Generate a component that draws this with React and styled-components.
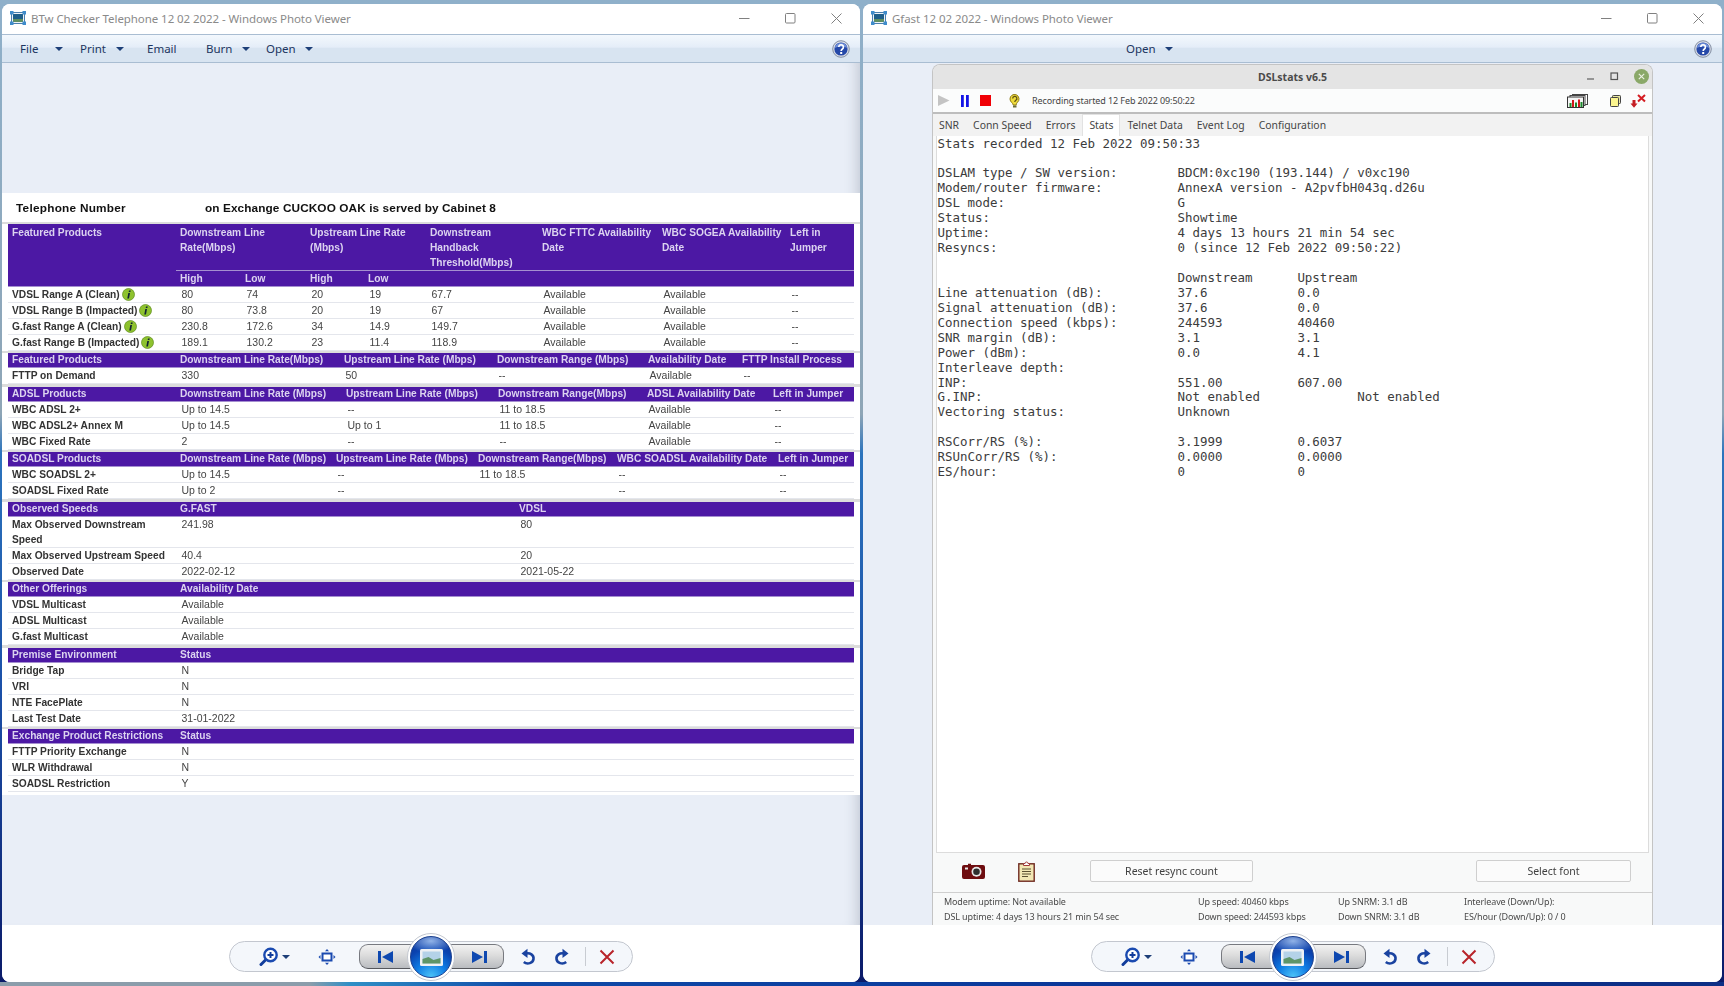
import React from "react";
import styled, { createGlobalStyle } from "styled-components";

const Global = createGlobalStyle`
  html, body { margin: 0; padding: 0; height: 986px; overflow: hidden; }
  #root { height: 986px; }
  * { box-sizing: border-box; }
`;

const Desktop = styled.div`
  height: 986px;
  width: 1724px;
  display: flex;
  gap: 3px;
  padding: 4px 2px;
  background:
    linear-gradient(to right, #8b9dab 0, #8b9dab 310px, #2f8fc6 350px, #0f4aa8 520px, #0b3a9c 1000px, #0a2f8c 1300px, #0d2f86 1724px) bottom / 100% 4px no-repeat,
    linear-gradient(to bottom, #8fb0ca 0, #8ea5b6 42%, #2c74bd 46%, #1b50a8 70%, #0b1a68 100%);
`;

const Window = styled.section`
  flex: 0 0 ${(p) => p.$w}px;
  display: flex;
  flex-direction: column;
  background: #fff;
  border-radius: 8px;
  overflow: hidden;
  font-family: "Noto Sans", "Open Sans", sans-serif;
`;

const TitleBar = styled.header`
  flex: 0 0 30px;
  display: flex;
  align-items: center;
  padding: 0 8px 2px;
  gap: 5px;
  background: #fff;
`;

const TitleText = styled.div`
  flex: 1;
  font-size: 11.5px;
  color: #8a8a8a;
  letter-spacing: -0.07px;
`;

const WinControls = styled.div`
  display: flex;
  align-items: center;
  gap: 35px;
  padding-right: 10px;
  svg { display: block; }
`;

const MenuBar = styled.nav`
  flex: 0 0 29px;
  display: flex;
  align-items: center;
  padding: 0 10px 0 ${(p) => p.$pad}px;
  background: linear-gradient(to bottom, #f3f8fd 0, #e4edf8 46%, #d8e4f1 47%, #d8e4f1 100%);
  border-top: 1px solid #a9bdd2;
  border-bottom: 1px solid #a9bdd2;
`;

const MenuItem = styled.div`
  flex: 0 0 ${(p) => p.$w}px;
  display: flex;
  align-items: center;
  font-size: 11.5px;
  color: #1c3560;
`;

const MenuLabel = styled.span`
  flex: 0 0 ${(p) => p.$w}px;
`;

const Caret = styled.span`
  width: 0;
  height: 0;
  border-left: 4px solid transparent;
  border-right: 4px solid transparent;
  border-top: 4px solid #1d3f78;
`;

const HelpWrap = styled.div`
  margin-left: auto;
  display: flex;
`;

const Viewer = styled.main`
  flex: 1;
  min-height: 0;
  background: #e9eef7;
  box-shadow: inset ${(p) => (p.$shade ? "-14px 0 14px -12px rgba(60,70,90,.25)" : "none")};
  display: flex;
  flex-direction: column;
  align-items: center;
  padding-top: ${(p) => p.$top}px;
`;

const Footer = styled.footer`
  flex: 0 0 57px;
  background: #fff;
  display: flex;
  justify-content: center;
  padding-top: 16px;
`;

const NavPill = styled.div`
  position: relative;
  width: 404px;
  height: 31px;
  border: 1px solid #c3c7cf;
  border-radius: 16px;
  background: #f4f7fb;
  display: flex;
  align-items: center;
`;

const NavIcon = styled.span`
  flex: 0 0 ${(p) => p.$w}px;
  margin-left: ${(p) => p.$ml}px;
  display: flex;
  justify-content: center;
  align-items: center;
  svg { display: block; }
`;

const NavCapsule = styled.div`
  flex: 0 0 145px;
  margin-left: 22px;
  height: 25px;
  border: 1px solid #77797f;
  border-bottom: 1.5px solid #55575c;
  border-radius: 9px;
  background: linear-gradient(to bottom, #f2f2f2 0, #dcdcdc 45%, #b9bcc0 100%);
  display: flex;
  justify-content: space-between;
  align-items: center;
  padding: 0 16px 0 18px;
`;

const NavSep = styled.span`
  flex: 0 0 1px;
  height: 19px;
  margin-left: 14px;
  background: #c8ccd2;
`;

const OrbRing = styled.div`
  position: absolute;
  left: 177px;
  top: -9px;
  width: 48px;
  height: 48px;
  border-radius: 50%;
  background: #fff;
  border: 1px solid #c4c8d0;
  display: flex;
  align-items: center;
  justify-content: center;
`;

const Orb = styled.div`
  width: 42px;
  height: 42px;
  border-radius: 50%;
  border: 1px solid #1a3f8e;
  background:
    radial-gradient(ellipse 60% 30% at 50% 10%, rgba(190, 220, 255, 0.75) 0, rgba(190, 220, 255, 0) 100%),
    radial-gradient(circle at 50% 100%, #4cc4f8 0, #0f7ce4 35%, #0a43b0 65%, #0a2f94 100%);
  display: flex;
  align-items: center;
  justify-content: center;
`;

/* ------- scanned document ------- */
const Doc = styled.article`
  width: 100%;
  background: #dcdcdc;
  font-family: "Liberation Sans", Arial, sans-serif;
  font-size: 10.5px;
  filter: blur(0.3px);
`;

const DocTitle = styled.h1`
  margin: 0;
  height: 29px;
  display: flex;
  align-items: center;
  padding-left: 14px;
  background: #fff;
  font-size: 11.8px;
  font-weight: 700;
  color: #111;
  letter-spacing: 0.1px;
`;

const DocTitleLabel = styled.span`
  flex: 0 0 189px;
  letter-spacing: 0.25px;
`;

const Section = styled.div`
  background: #fff;
  padding: 0 6px;
  margin-top: ${(p) => (p.$first ? 2 : 2.57)}px;
`;

const Grid = styled.div`
  display: grid;
  grid-template-columns: ${(p) => p.$cols};
`;

const HeadGrid = styled(Grid)`
  background: #4c18a4;
  color: #dcd3f0;
  font-weight: 700;
  font-size: 10.2px;
  border-bottom: 1px solid #a58fd0;
`;

const HeadCell = styled.div`
  grid-column: span ${(p) => p.$span || 1};
  grid-row: span ${(p) => p.$rows || 1};
  padding-left: 4px;
  padding-right: 2px;
  line-height: ${(p) => p.$lh || 14}px;
  ${(p) => p.$top && "padding-top: 0.5px;"}
  white-space: ${(p) => (p.$wrap ? "normal" : "nowrap")};
`;

const SubCell = styled.div`
  height: 16px;
  line-height: 15px;
  padding-left: 4px;
  border-top: 1px solid #a58fd0;
`;

const BodyGrid = styled(Grid)`
  border-bottom: 1px solid #e4e6ec;
  min-height: 16px;
`;

const NameCell = styled.div`
  padding-left: 4px;
  padding-right: 6px;
  line-height: 15px;
  font-size: 10.2px;
  font-weight: 700;
  color: #333;
  display: block;
  white-space: ${(p) => (p.$wrap ? "normal" : "nowrap")};
  svg { vertical-align: -3px; margin-left: 2px; }
`;

const ValueCell = styled.div`
  padding-left: 5.5px;
  line-height: 15px;
  color: #444;
  white-space: nowrap;
`;

const DocEnd = styled.div`
  height: 3px;
  background: #fff;
`;

/* ------- DSLstats ------- */
const Dsl = styled.div`
  width: 721px;
  height: 861px;
  margin-top: 1px;
  display: flex;
  flex-direction: column;
  border: 1px solid #c4c4c4;
  border-bottom: 0;
  border-radius: 8px 8px 0 0;
  overflow: hidden;
  background: #f8f9f9;
  font-family: "Noto Sans", "Open Sans", sans-serif;
  color: #444;
  filter: blur(0.2px);
`;

const DslTitle = styled.div`
  position: relative;
  flex: 0 0 24px;
  background: #e4e4e4;
  display: flex;
  align-items: center;
  justify-content: center;
  font-size: 10.5px;
  font-weight: 700;
  color: #4a4a4a;
`;

const DslControls = styled.div`
  position: absolute;
  right: 3px;
  top: 4px;
  display: flex;
  align-items: center;
  gap: 12px;
  svg { display: block; }
`;

const DslTools = styled.div`
  flex: 0 0 25px;
  background: #fbfcfc;
  border-bottom: 2px solid #bdbdbd;
  display: flex;
  align-items: center;
  padding: 0 6px 0 5px;
  svg { display: block; }
`;

const DslToolIcon = styled.span`
  flex: 0 0 auto;
  margin-left: ${(p) => p.$ml || 0}px;
  display: flex;
`;

const DslStatus = styled.span`
  margin-left: 11px;
  font-size: 9px;
  letter-spacing: -0.1px;
  color: #444;
  flex: 1;
`;

const Tabs = styled.div`
  flex: 0 0 22px;
  background: #f2f2f2;
  display: flex;
  align-items: stretch;
  padding-left: 6px;
  gap: 14px;
  font-size: 10.4px;
`;

const Tab = styled.div`
  display: flex;
  align-items: center;
  color: #444;
  ${(p) =>
    p.$active &&
    `background:#fff; border:1px solid #e2e2e2; border-bottom:0; padding:0 6px 2px; margin:0 -7px 0 -7px;`}
`;

const StatsPane = styled.pre`
  flex: 1;
  min-height: 0;
  margin: 0 3px;
  padding: 0.5px 0 0 0.5px;
  background: #fff;
  border: 1px solid #dcdcdc;
  border-top: 0;
  font-family: "DejaVu Sans Mono", "Liberation Mono", monospace;
  font-size: 12.46px;
  line-height: 14.93px;
  color: #3c3c3c;
`;

const ActionRow = styled.div`
  flex: 0 0 39px;
  display: flex;
  align-items: center;
  padding-bottom: 3px;
  svg { display: block; }
`;

const ActionIcon = styled.span`
  flex: 0 0 ${(p) => p.$w}px;
  margin-left: ${(p) => p.$ml}px;
  display: flex;
  justify-content: center;
`;

const ActionButton = styled.div`
  flex: 0 0 ${(p) => p.$w}px;
  margin-left: ${(p) => p.$ml}px;
  height: 22px;
  border: 1px solid #cfcfcf;
  border-radius: 2px;
  background: #fbfbfb;
  display: flex;
  align-items: center;
  justify-content: center;
  font-size: 10.5px;
  color: #3f3f3f;
`;

const StatusPanel = styled.div`
  flex: 0 0 33px;
  border-top: 1px solid #cfcfcf;
  display: flex;
  padding: 1px 0 0 11px;
  font-size: 9px;
  letter-spacing: -0.12px;
  line-height: 15px;
  color: #4a4a4a;
`;

const StatusCol = styled.div`
  flex: 0 0 ${(p) => p.$w}px;
  white-space: nowrap;
`;

/* ------- icons ------- */
const PhotoIcon = () => (
  <svg width="16" height="16" viewBox="0 0 16 16">
    <rect x="1.5" y="2.5" width="13" height="11" fill="#eef3f8" stroke="#4a7fae" />
    <rect x="3" y="4" width="10" height="5" fill="#1f5f8a" />
    <rect x="3" y="9" width="10" height="3" fill="#5f8f62" />
    <g fill="#3f8ccb">
      <rect x="0" y="1" width="3.5" height="3.5" />
      <rect x="12.5" y="1" width="3.5" height="3.5" />
      <rect x="0" y="11.5" width="3.5" height="3.5" />
      <rect x="12.5" y="11.5" width="3.5" height="3.5" />
    </g>
  </svg>
);

const MinIcon = () => (
  <svg width="11" height="11" viewBox="0 0 11 11"><path d="M0 5.5H10.5" stroke="#808080" /></svg>
);
const MaxIcon = () => (
  <svg width="11" height="11" viewBox="0 0 11 11"><rect x=".5" y=".5" width="9.5" height="9.5" rx="1" fill="none" stroke="#808080" /></svg>
);
const CloseIcon = () => (
  <svg width="11" height="11" viewBox="0 0 11 11"><path d="M.5.5 10.5 10.5M10.5.5 .5 10.5" stroke="#808080" /></svg>
);

const HelpIcon = () => (
  <svg width="18" height="18" viewBox="0 0 18 18">
    <circle cx="9" cy="9" r="8.3" fill="#d8dce6" stroke="#6d7a90" strokeWidth=".8" />
    <circle cx="9" cy="9" r="6.6" fill="#2548a8" />
    <path d="M2.6 8a6.6 6.6 0 0 1 12.8 0c-3-1.6-9.8-1.6-12.8 0z" fill="#6f8ed8" />
    <path d="M6.8 7a2.3 2.3 0 1 1 3.6 2c-.9.6-1.2 1-1.2 2" fill="none" stroke="#fff" strokeWidth="1.7" />
    <rect x="8.2" y="12" width="2" height="2" fill="#fff" />
  </svg>
);

const ZoomIcon = () => (
  <svg width="20" height="20" viewBox="0 0 20 20">
    <path d="M7 12.5 2 17.5" stroke="#123d9c" strokeWidth="3" strokeLinecap="round" />
    <circle cx="11.5" cy="8" r="6.2" fill="#fff" stroke="#1a4ab0" strokeWidth="2.4" />
    <path d="M8.5 8h6M11.5 5v6" stroke="#123d9c" strokeWidth="2" />
  </svg>
);

const FitIcon = () => (
  <svg width="18" height="18" viewBox="0 0 18 18" fill="#1a4ab0">
    <rect x="4.5" y="5.5" width="9" height="7" fill="#fff" stroke="#1a4ab0" strokeWidth="2" />
    <path d="M9 1 11 3.300H7zM9 17 7 14.700H11zM.5 9 2.500 7V11zM17.500 9 15.500 11V7z" />
  </svg>
);

const PrevIcon = () => (
  <svg width="15" height="12" viewBox="0 0 15 12" fill="#0e48b0">
    <rect x="0" y="0" width="3" height="12" />
    <path d="M15 0V12L4 6z" />
  </svg>
);

const NextIcon = () => (
  <svg width="15" height="12" viewBox="0 0 15 12" fill="#0e48b0">
    <rect x="12" y="0" width="3" height="12" />
    <path d="M0 0V12L11 6z" />
  </svg>
);

const RotateIcon = ({ flip }) => (
  <svg width="18" height="18" viewBox="0 0 18 18" style={flip ? { transform: "scaleX(-1)" } : undefined}>
    <path d="M7 5.500C11 4.500 15 7 14.500 11 14 15 8.500 17 4.800 14" fill="none" stroke="#1a43a0" strokeWidth="2.6" />
    <path d="M2.500 5.500 8.500 .8V10z" fill="#1a43a0" />
  </svg>
);

const RedX = () => (
  <svg width="16" height="16" viewBox="0 0 16 16"><path d="M1.500 1.500 14.500 14.500M14.500 1.500 1.500 14.500" stroke="#b8242a" strokeWidth="2" /></svg>
);

const OrbPicture = () => (
  <svg width="23" height="17" viewBox="0 0 23 17">
    <rect width="23" height="17" rx="1.500" fill="#eef1f4" />
    <rect x="2.500" y="2.500" width="18" height="12" fill="#b4d2e8" />
    <path d="M2.500 14.500V10l6-2 5 3 7-2v5.500z" fill="#5e9568" />
  </svg>
);

const InfoBadge = () => (
  <svg width="13" height="13" viewBox="0 0 13 13">
    <circle cx="6.500" cy="6.500" r="6" fill="#8ec22e" stroke="#5d8a1c" strokeWidth=".7" />
    <path d="M7 2.400h1.700l-.3 1.500H6.700zM6.300 5h1.700L7 10.500H5.300z" fill="#123" />
  </svg>
);

const PlayIcon = () => (
  <svg width="12" height="11" viewBox="0 0 12 11"><path d="M0 0 11.500 5.500 0 11z" fill="#c4c4c4" /></svg>
);
const PauseIcon = () => (
  <svg width="8" height="12" viewBox="0 0 8 12" fill="#1414e6"><rect width="2.800" height="12" /><rect x="5" width="2.800" height="12" /></svg>
);
const StopIcon = () => (
  <svg width="11" height="11" viewBox="0 0 11 11"><rect width="11" height="11" fill="#f00006" /></svg>
);
const BulbIcon = () => (
  <svg width="13" height="14" viewBox="0 0 13 14">
    <path d="M2 5a4.500 4.500 0 1 1 7.500 3.300C8.500 9.300 8.300 10 8.300 11H5.200C5.200 9 2 8 2 5z" fill="#eedb3c" stroke="#8e7a14" strokeWidth="1" />
    <path d="M4.700 4.500a2.100 2.100 0 1 1 3.200 1.700C7 6.800 6.800 7.200 6.800 8" fill="none" stroke="#5c4f10" strokeWidth="1.300" />
    <rect x="5" y="11.500" width="3.500" height="2" fill="#6b6b3a" />
  </svg>
);
const ChartIcon = () => (
  <svg width="21" height="14" viewBox="0 0 21 14">
    <rect x="5.500" y=".5" width="15" height="10" fill="#fff" stroke="#444" />
    <rect x="3" y="1.500" width="15" height="10" fill="#fff" stroke="#444" />
    <rect x=".5" y="3" width="16" height="10.500" fill="#f5f5f5" stroke="#333" />
    <rect x="2.500" y="9" width="2" height="4" fill="#1c8c2c" />
    <rect x="5" y="6" width="2" height="7" fill="#d01818" />
    <rect x="8" y="8.500" width="2" height="4.500" fill="#1c8c2c" />
    <rect x="11" y="5.500" width="2" height="7.500" fill="#d01818" />
    <rect x="13.500" y="8" width="2" height="5" fill="#1c8c2c" />
  </svg>
);
const CopyIcon = () => (
  <svg width="11" height="12" viewBox="0 0 11 12">
    <rect x="2.500" y=".5" width="8" height="8" rx=".8" fill="#e9e7a0" stroke="#444" />
    <rect x=".5" y="2.500" width="8" height="9" rx=".8" fill="#fbf58e" stroke="#444" />
  </svg>
);
const DropIcon = () => (
  <svg width="16" height="14" viewBox="0 0 16 14">
    <path d="M8 1 15 7.500M15 1 8 7.500" stroke="#d41c22" strokeWidth="2" fill="none" />
    <path d="M2.500 6h3v3.500H7.500L4 13.800.5 9.500h2z" fill="#c41e24" />
  </svg>
);
const CameraIcon = () => (
  <svg width="23" height="16" viewBox="0 0 23 16">
    <path d="M2 2h4V.8h3V2h12a2 2 0 0 1 2 2v10a2 2 0 0 1-2 2H2a2 2 0 0 1-2-2V4a2 2 0 0 1 2-2z" fill="#6e0d10" />
    <circle cx="14.500" cy="8.800" r="5" fill="#e8e8e8" />
    <circle cx="14.500" cy="8.800" r="3.300" fill="#2e2e2e" />
    <rect x="3" y="4.500" width="3" height="2" fill="#e8e8e8" />
  </svg>
);
const ClipIcon = () => (
  <svg width="17" height="21" viewBox="0 0 17 21">
    <rect x=".8" y="2.800" width="15.400" height="17.400" fill="#f2e7b4" stroke="#6e2a20" strokeWidth="1.400" />
    <path d="M5.500 4.500V2.500H7a1.500 1.500 0 0 1 3 0h1.500v2z" fill="#fff" stroke="#a03a3a" />
    <path d="M4 8h9M4 10.500h9M4 13h9M4 15.500h6" stroke="#5b5030" strokeWidth="1.100" />
  </svg>
);

const DslMin = () => (
  <svg width="9" height="11" viewBox="0 0 9 11"><path d="M1 8H8" stroke="#444" strokeWidth="1.200" /></svg>
);
const DslMax = () => (
  <svg width="15" height="11" viewBox="0 0 15 11"><rect x="4" y="2" width="6.500" height="6.500" fill="none" stroke="#555" strokeWidth="1.200" /></svg>
);
const DslClose = () => (
  <svg width="15" height="15" viewBox="0 0 15 15">
    <circle cx="7.500" cy="7.500" r="7.500" fill="#8aa868" />
    <path d="M4.800 4.800 10.200 10.200M10.200 4.800 4.800 10.200" stroke="#eef2e6" strokeWidth="1.100" />
  </svg>
);

const NavBar = () => (
  <Footer>
    <NavPill>
      <NavIcon $w={20} $ml={29}><ZoomIcon /></NavIcon>
      <NavIcon $w={8} $ml={3}><Caret /></NavIcon>
      <NavIcon $w={20} $ml={27}><FitIcon /></NavIcon>
      <NavCapsule><PrevIcon /><NextIcon /></NavCapsule>
      <NavIcon $w={18} $ml={15}><RotateIcon /></NavIcon>
      <NavIcon $w={18} $ml={16}><RotateIcon flip /></NavIcon>
      <NavSep />
      <NavIcon $w={18} $ml={12}><RedX /></NavIcon>
      <OrbRing><Orb><OrbPicture /></Orb></OrbRing>
    </NavPill>
  </Footer>
);

const Win = ({ title, width, children, menu, menuPad, shade, top }) => (
  <Window $w={width}>
    <TitleBar>
      <PhotoIcon />
      <TitleText>{title}</TitleText>
      <WinControls><MinIcon /><MaxIcon /><CloseIcon /></WinControls>
    </TitleBar>
    <MenuBar $pad={menuPad}>
      {menu.map((m) => (
        <MenuItem key={m.t} $w={m.w}>
          <MenuLabel $w={m.lw}>{m.t}</MenuLabel>
          {m.caret && <Caret />}
        </MenuItem>
      ))}
      <HelpWrap><HelpIcon /></HelpWrap>
    </MenuBar>
    <Viewer $shade={shade} $top={top}>{children}</Viewer>
    <NavBar />
  </Window>
);

/* ------- data ------- */
const products = [
  ["VDSL Range A (Clean)", "80", "74", "20", "19", "67.7", "Available", "Available", "--"],
  ["VDSL Range B (Impacted)", "80", "73.8", "20", "19", "67", "Available", "Available", "--"],
  ["G.fast Range A (Clean)", "230.8", "172.6", "34", "14.9", "149.7", "Available", "Available", "--"],
  ["G.fast Range B (Impacted)", "189.1", "130.2", "23", "11.4", "118.9", "Available", "Available", "--"],
];

const tables = [
  {
    cols: "168px 164px 153px 151px 94px 1fr",
    head: ["Featured Products", "Downstream Line Rate(Mbps)", "Upstream Line Rate (Mbps)", "Downstream Range (Mbps)", "Availability Date", "FTTP Install Process"],
    rows: [["FTTP on Demand", "330", "50", "--", "Available", "--"]],
  },
  {
    cols: "168px 166px 152px 149px 126px 1fr",
    head: ["ADSL Products", "Downstream Line Rate (Mbps)", "Upstream Line Rate (Mbps)", "Downstream Range(Mbps)", "ADSL Availability Date", "Left in Jumper"],
    rows: [
      ["WBC ADSL 2+", "Up to 14.5", "--", "11 to 18.5", "Available", "--"],
      ["WBC ADSL2+ Annex M", "Up to 14.5", "Up to 1", "11 to 18.5", "Available", "--"],
      ["WBC Fixed Rate", "2", "--", "--", "Available", "--"],
    ],
  },
  {
    cols: "168px 156px 142px 139px 161px 1fr",
    head: ["SOADSL Products", "Downstream Line Rate (Mbps)", "Upstream Line Rate (Mbps)", "Downstream Range(Mbps)", "WBC SOADSL Availability Date", "Left in Jumper"],
    rows: [
      ["WBC SOADSL 2+", "Up to 14.5", "--", "11 to 18.5", "--", "--"],
      ["SOADSL Fixed Rate", "Up to 2", "--", "", "--", "--"],
    ],
  },
  {
    cols: "168px 339px 1fr",
    head: ["Observed Speeds", "G.FAST", "VDSL"],
    rows: [
      ["Max Observed Downstream Speed", "241.98", "80"],
      ["Max Observed Upstream Speed", "40.4", "20"],
      ["Observed Date", "2022-02-12", "2021-05-22"],
    ],
  },
  {
    cols: "168px 1fr",
    head: ["Other Offerings", "Availability Date"],
    rows: [["VDSL Multicast", "Available"], ["ADSL Multicast", "Available"], ["G.fast Multicast", "Available"]],
  },
  {
    cols: "168px 1fr",
    head: ["Premise Environment", "Status"],
    rows: [["Bridge Tap", "N"], ["VRI", "N"], ["NTE FacePlate", "N"], ["Last Test Date", "31-01-2022"]],
  },
  {
    cols: "168px 1fr",
    head: ["Exchange Product Restrictions", "Status"],
    rows: [["FTTP Priority Exchange", "N"], ["WLR Withdrawal", "N"], ["SOADSL Restriction", "Y"]],
  },
];

const PRODUCT_COLS = "168px 65px 65px 58px 62px 112px 120px 128px 1fr";

const stat = (a, b = "", c = "", col = 48) =>
  (a.padEnd(32) + (c ? b.padEnd(col - 32) + c : b)).trimEnd();

const statsText = [
  "Stats recorded 12 Feb 2022 09:50:33",
  "",
  stat("DSLAM type / SW version:", "BDCM:0xc190 (193.144) / v0xc190"),
  stat("Modem/router firmware:", "AnnexA version - A2pvfbH043q.d26u"),
  stat("DSL mode:", "G"),
  stat("Status:", "Showtime"),
  stat("Uptime:", "4 days 13 hours 21 min 54 sec"),
  stat("Resyncs:", "0 (since 12 Feb 2022 09:50:22)"),
  "",
  stat("", "Downstream", "Upstream"),
  stat("Line attenuation (dB):", "37.6", "0.0"),
  stat("Signal attenuation (dB):", "37.6", "0.0"),
  stat("Connection speed (kbps):", "244593", "40460"),
  stat("SNR margin (dB):", "3.1", "3.1"),
  stat("Power (dBm):", "0.0", "4.1"),
  stat("Interleave depth:"),
  stat("INP:", "551.00", "607.00"),
  stat("G.INP:", "Not enabled", "Not enabled", 56),
  stat("Vectoring status:", "Unknown"),
  "",
  stat("RSCorr/RS (%):", "3.1999", "0.6037"),
  stat("RSUnCorr/RS (%):", "0.0000", "0.0000"),
  stat("ES/hour:", "0", "0"),
].join("\n");

const leftMenu = [
  { t: "File", w: 60, lw: 35, caret: true },
  { t: "Print", w: 67, lw: 36, caret: true },
  { t: "Email", w: 59, lw: 30 },
  { t: "Burn", w: 60, lw: 36, caret: true },
  { t: "Open", w: 60, lw: 39, caret: true },
];

const rightMenu = [{ t: "Open", w: 60, lw: 39, caret: true }];

const tabs = ["SNR", "Conn Speed", "Errors", "Stats", "Telnet Data", "Event Log", "Configuration"];

export default function App() {
  return (
    <>
      <Global />
      <Desktop>
        <Win title="BTw Checker Telephone 12 02 2022 - Windows Photo Viewer" width={858} menu={leftMenu} menuPad={18} shade top={130}>
          <Doc>
            <DocTitle>
              <DocTitleLabel>Telephone Number</DocTitleLabel>
              <span>on Exchange CUCKOO OAK is served by Cabinet 8</span>
            </DocTitle>
            <Section $first>
              <HeadGrid $cols={PRODUCT_COLS}>
                <HeadCell $rows={2} $lh={15} $top>Featured Products</HeadCell>
                <HeadCell $span={2} $lh={15} $wrap $top>Downstream Line Rate(Mbps)</HeadCell>
                <HeadCell $span={2} $lh={15} $wrap $top>Upstream Line Rate (Mbps)</HeadCell>
                <HeadCell $lh={15} $wrap $top>Downstream Handback Threshold(Mbps)</HeadCell>
                <HeadCell $lh={15} $wrap $top>WBC FTTC Availability Date</HeadCell>
                <HeadCell $lh={15} $wrap $top>WBC SOGEA Availability Date</HeadCell>
                <HeadCell $lh={15} $wrap $top>Left in Jumper</HeadCell>
                <SubCell>High</SubCell>
                <SubCell>Low</SubCell>
                <SubCell>High</SubCell>
                <SubCell>Low</SubCell>
                <SubCell />
                <SubCell />
                <SubCell />
                <SubCell />
              </HeadGrid>
              {products.map(([name, ...vals]) => (
                <BodyGrid key={name} $cols={PRODUCT_COLS}>
                  <NameCell>{name}<InfoBadge /></NameCell>
                  {vals.map((v, i) => (
                    <ValueCell key={i}>{v}</ValueCell>
                  ))}
                </BodyGrid>
              ))}
            </Section>
            {tables.map((t) => (
              <Section key={t.head[0]}>
                <HeadGrid $cols={t.cols}>
                  {t.head.map((h) => (
                    <HeadCell key={h}>{h}</HeadCell>
                  ))}
                </HeadGrid>
                {t.rows.map(([name, ...vals]) => (
                  <BodyGrid key={name} $cols={t.cols}>
                    <NameCell $wrap>{name}</NameCell>
                    {vals.map((v, i) => (
                      <ValueCell key={i}>{v}</ValueCell>
                    ))}
                  </BodyGrid>
                ))}
              </Section>
            ))}
            <DocEnd />
          </Doc>
        </Win>
        <Win title="Gfast 12 02 2022 - Windows Photo Viewer" width={859} menu={rightMenu} menuPad={263} top={0}>
          <Dsl>
            <DslTitle>
              DSLstats v6.5
              <DslControls><DslMin /><DslMax /><DslClose /></DslControls>
            </DslTitle>
            <DslTools>
              <DslToolIcon><PlayIcon /></DslToolIcon>
              <DslToolIcon $ml={11}><PauseIcon /></DslToolIcon>
              <DslToolIcon $ml={11}><StopIcon /></DslToolIcon>
              <DslToolIcon $ml={17}><BulbIcon /></DslToolIcon>
              <DslStatus>Recording started 12 Feb 2022 09:50:22</DslStatus>
              <DslToolIcon><ChartIcon /></DslToolIcon>
              <DslToolIcon $ml={22}><CopyIcon /></DslToolIcon>
              <DslToolIcon $ml={9}><DropIcon /></DslToolIcon>
            </DslTools>
            <Tabs>
              {tabs.map((t) => (
                <Tab key={t} $active={t === "Stats"}>{t}</Tab>
              ))}
            </Tabs>
            <StatsPane>{statsText}</StatsPane>
            <ActionRow>
              <ActionIcon $w={23} $ml={29}><CameraIcon /></ActionIcon>
              <ActionIcon $w={17} $ml={33}><ClipIcon /></ActionIcon>
              <ActionButton $w={163} $ml={55}>Reset resync count</ActionButton>
              <ActionButton $w={155} $ml={223}>Select font</ActionButton>
            </ActionRow>
            <StatusPanel>
              <StatusCol $w={254}>
                Modem uptime: Not available<br />DSL uptime: 4 days 13 hours 21 min 54 sec
              </StatusCol>
              <StatusCol $w={140}>
                Up speed: 40460 kbps<br />Down speed: 244593 kbps
              </StatusCol>
              <StatusCol $w={126}>
                Up SNRM: 3.1 dB<br />Down SNRM: 3.1 dB
              </StatusCol>
              <StatusCol $w={170}>
                Interleave (Down/Up):<br />ES/hour (Down/Up): 0 / 0
              </StatusCol>
            </StatusPanel>
          </Dsl>
        </Win>
      </Desktop>
    </>
  );
}
